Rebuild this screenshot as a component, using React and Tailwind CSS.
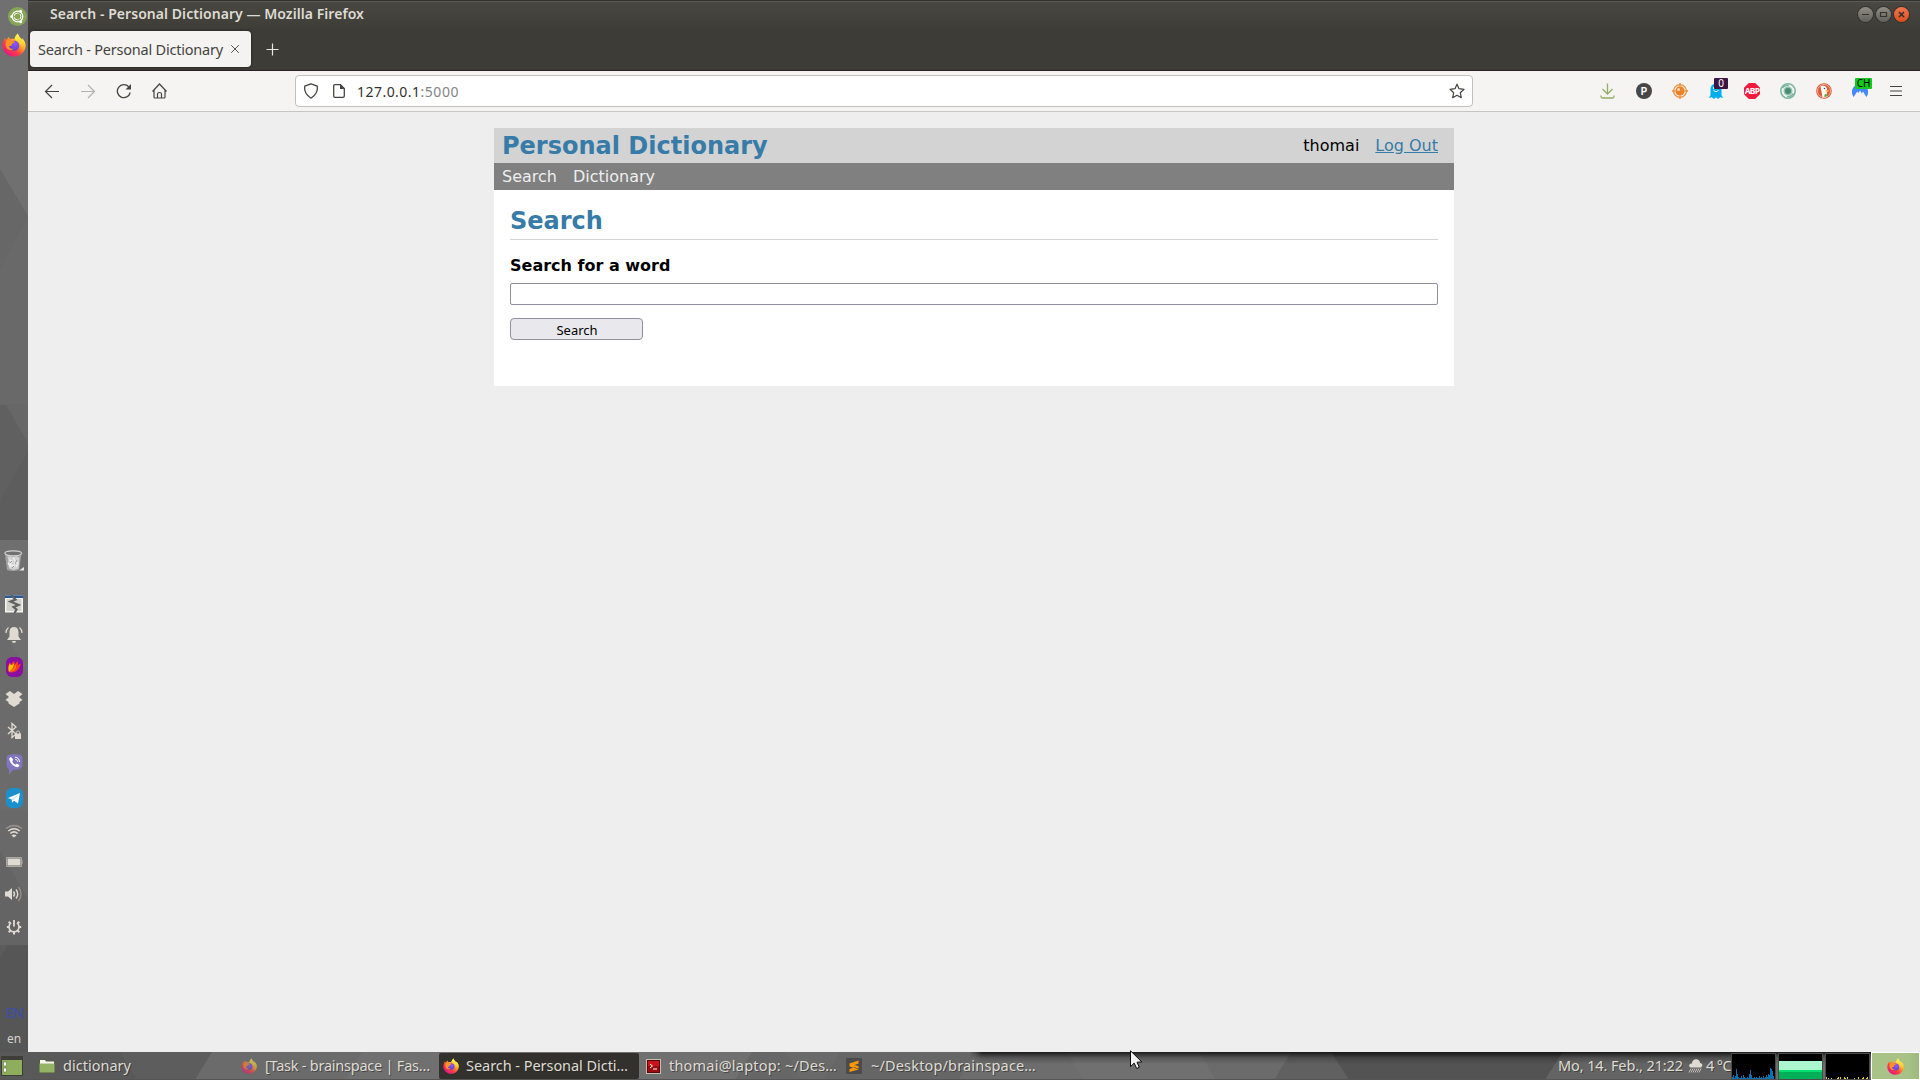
import React, { useLayoutEffect, useRef } from "react";

// Text run whose letter spacing is adjusted so that it fills a known width.
function Fit({ w, className = "", children }) {
  const ref = useRef(null);
  useLayoutEffect(() => {
    const el = ref.current;
    el.style.letterSpacing = "0px";
    const natural = el.getBoundingClientRect().width;
    el.style.letterSpacing = `${(w - natural) / el.textContent.length}px`;
  }, [w]);
  return (
    <span ref={ref} className={`inline-block whitespace-pre font-['Noto_Sans',sans-serif] ${className}`}>
      {children}
    </span>
  );
}

function Svg({ w = 16, h = 16, box, className = "", children }) {
  return (
    <svg width={w} height={h} viewBox={box || `0 0 ${w} ${h}`} fill="none" className={`block shrink-0 ${className}`}>
      {children}
    </svg>
  );
}

function Firefox({ id, size = 24, className = "" }) {
  return (
    <Svg w={size} h={size} box="0 0 24 24" className={className}>
      <defs>
        <linearGradient id={`${id}a`} x1="20" y1="3" x2="5" y2="22" gradientUnits="userSpaceOnUse">
          <stop offset="0" stopColor="#fff44f" />
          <stop offset=".35" stopColor="#ffa72b" />
          <stop offset=".65" stopColor="#ff4040" />
          <stop offset="1" stopColor="#e31587" />
        </linearGradient>
        <linearGradient id={`${id}c`} x1="18" y1="1" x2="17" y2="20" gradientUnits="userSpaceOnUse">
          <stop offset="0" stopColor="#fff44f" />
          <stop offset=".5" stopColor="#ffd033" />
          <stop offset="1" stopColor="#ff7a2b" stopOpacity="0" />
        </linearGradient>
        <radialGradient id={`${id}b`} cx=".6" cy=".3" r=".8">
          <stop offset="0" stopColor="#9059ff" />
          <stop offset="1" stopColor="#5a3bc0" />
        </radialGradient>
      </defs>
      <path d="M3 5.2C3.4 6 4 6.5 4.7 6.9 5.2 5.5 6 4.5 7 3.8c0 1 .5 1.800 1.200 2.300 1.500-.4 3-.3 4.300.2C13 4 14 2 16 .6c.2 2.400 1.600 3.400 3 5 .5.500.8 1 1.100 1.600.1-.7 0-1.200-.2-1.900C22.500 7.600 23.600 10.300 23.500 13c-.2 6-5.200 10.600-11.500 10.600S.5 18.700.5 12.600C.5 9.500 1.500 7.100 3 5.200Z" fill={`url(#${id}a)`} />
      <path d="M12.500 6.300C13 4 14 2 16 .6c.2 2.400 1.600 3.400 3 5 .5.500.8 1 1.100 1.600.1-.7 0-1.200-.2-1.900C22.500 7.600 23.600 10.300 23.500 13c-.1 3-1.500 5.700-3.700 7.600C21 15 18 9 12.500 6.300Z" fill={`url(#${id}c)`} />
      <circle cx="12.200" cy="12.800" r="5" fill={`url(#${id}b)`} />
      <path d="M3 5.200c.8 1.300 2 1.800 3.500 1.900C8.300 7.200 9 8 11 8.300c1 .1 1.600.4 1.500 1-.2.900-1.600.9-2.300 1.400-.6.500-.3 1.400-1 2-1 .8-2.200.2-2.200.2.300 2.300 2.400 3.300 4.500 2.800-2 2.300-6.200 1.300-7.500-2C3 11 4 8.500 4.500 7.500Z" fill="#ff9226" />
    </Svg>
  );
}

const Ubuntu = () => (
  <Svg w={19} h={19} box="0 0 19 19" className="translate-x-[3px]">
    <circle cx="9.500" cy="9.500" r="9.500" fill="#87a556" />
    <circle cx="9.500" cy="9.500" r="5.300" stroke="#fff" strokeWidth="1.200" />
    <circle cx="9.500" cy="9.500" r="3.400" stroke="#fff" strokeWidth="1" />
    <path d="M9.500 9.500H2M9.500 9.500l3.700-6.500M9.500 9.500l3.700 6.500" stroke="#87a556" strokeWidth="1.300" />
    <circle cx="3.700" cy="9.500" r="1.500" fill="#fff" />
    <circle cx="12.600" cy="4.300" r="1.500" fill="#fff" />
    <circle cx="12.600" cy="14.700" r="1.500" fill="#fff" />
  </Svg>
);

const Trash = () => (
  <Svg w={20} h={22} className="translate-y-px">
    <path d="M.800 3 3 20q6 2 12 0L17.600 3Z" fill="#a2a2a2" />
    <path d="m3.500 7 3-1 2.500 2 3-2 3.500 1.500-.5 5-.5 6-4.500 1.500-5-1.500-1-6 .5-2Z" fill="#d2d2d2" />
    <path d="m5 10 3 1-2 4 4 1 1-4 3 1-2 4M9 7l2 4M4 13l3 4" stroke="#efefef" strokeWidth="1.300" />
    <path d="m6 13 2-2M11 14l2-4M8 18l2-2" stroke="#8a8a8a" strokeWidth=".8" />
    <ellipse cx="9.200" cy="3.300" rx="8.400" ry="2.500" fill="#707070" stroke="#cfcfcf" strokeWidth="1.200" />
    <path d="m20 17-5 3.500h5Z" fill="#e4e4e4" />
  </Svg>
);
const Broken = () => (
  <Svg w={18} h={18}>
    <path d="M0 .500h18v17H0Z" fill="#f4f4f0" />
    <path d="M1.500 4h15v12h-15Z" fill="#d2d2cc" />
    <path d="M0 .500h18V3H0Z" fill="#2a5796" />
    <path d="M6 0l4.500 4.500-5 2 8 3.500-5 2 3 2.500-2 3.500" stroke="#606060" strokeWidth="2.200" />
  </Svg>
);
const Bell = () => (
  <Svg w={18} h={18}>
    <path d="M9 1c3.600 0 4.500 2.800 4.500 6v3.500L16 14H2l2.500-3.500V7C4.500 3.800 5.400 1 9 1ZM7 15h4c0 2.500-4 2.500-4 0Z" fill="#dfdbd2" />
    <path d="M3.500 1.500C2 2.700 1 4.500 1 7M14.500 1.500C16 2.700 17 4.500 17 7" stroke="#dfdbd2" strokeWidth="1.200" />
  </Svg>
);
const Flame = () => (
  <Svg w={17} h={20}>
    <rect width="17" height="20" rx="6" fill="#8a0fa0" />
    <path d="M3 15C1.500 11 2 8 4 5.500c.5 1 .5 2 .8 2.500C6 6.500 6.500 5 8.500 4c-.3 1.500 0 3 .3 4 .8-1.800 2-3 3.200-3.700-.2 1.600.2 2.700.2 3.700.8-.5 1.500-.9 2.800-1-1.500 2-1.500 4.500-4 6.500-2 1.500-5 2.500-8 1.500Z" fill="#ff3d1f" />
    <path d="M3 15c-1.300-4 0-7 1-9 .5 3 2 3 4.500-.5C7.500 8.500 8 11 3 15Z" fill="#ffc400" />
    <path d="M3 15c4-1.500 6.500-5 6-8 2 2 1 4.500-1.500 6.500Z" fill="#ff8a00" />
  </Svg>
);
const Dropbox = () => (
  <Svg w={18} h={16}>
    <path d="m5 0 4 3 4-3 4.500 3L14 6l3.500 3-3 2v1.500L9 16l-5.500-3.500V11l-3-2L4 6 .5 3Z" fill="#dfdbd2" />
  </Svg>
);
const Bluetooth = () => (
  <Svg w={16} h={18}>
    <path d="m2 5 8 7-4 3.500V1.500L10 5 2 12" stroke="#dfdbd2" strokeWidth="1.300" />
    <path d="M9 11.500h6V17H9Z" fill="#dfdbd2" />
    <path d="M10.300 12v-1.500c0-2 3.400-2 3.400 0V12" stroke="#dfdbd2" />
  </Svg>
);
const Viber = () => (
  <Svg w={17} h={21} className="translate-y-px">
    <path d="M3 .8Q8.500-.6 14 .8 16.500 1.500 16.500 5v5q0 4-2.500 5-3 1-7 1l-4 4.500V15Q.5 14 .5 10V5Q.5 1.500 3 .8Z" fill="#8175bd" />
    <path d="M4 3.500c1.500-1 2 .5 2.800 1.700.7 1.200-.8 1.500-.4 2.500.5 1.300 1.600 2.300 2.800 2.800 1 .3 1-1.200 2.300-.6 1.500.8 2.500 1.300 1.500 2.400-1 1.300-2 1.200-3.500.5C6.500 11.500 4.500 9 3.500 6.200c-.4-1.200-.4-2 .5-2.700Z" fill="#fff" />
    <path d="M9 3.200c2.800.2 4.500 2 4.500 4.800M9.300 5.300c1.300.1 2.200 1 2.300 2.300" stroke="#fff" />
  </Svg>
);
const Telegram = () => (
  <Svg w={17} h={20}>
    <rect width="17" height="20" rx="6" fill="#1c8fcd" />
    <path d="m2 10 12-5-2 10.500-4-2.700-2 1.900-.3-3.200Z" fill="#fff" />
    <path d="m5.700 11.500 6.300-4.500-5 5Z" fill="#a9d5ee" />
  </Svg>
);
const Wifi = () => (
  <Svg w={18} h={14}>
    <path d="M1 4.500Q9-1.500 17 4.500" stroke="#999690" strokeWidth="1.400" />
    <path d="M3.300 7Q9 2.500 14.700 7M5.300 9.500Q9 6.300 12.700 9.500" stroke="#dfdbd2" strokeWidth="1.500" />
    <path d="M6.500 11.500Q9 9.500 11.500 11.500L9 13.500Z" fill="#dfdbd2" />
  </Svg>
);
const Battery = () => (
  <Svg w={17} h={10}>
    <path d="M.5.500h15v9H.5ZM16 3v4" stroke="#aaa79f" />
    <path d="M1.500 1.500h13v7h-13Z" fill="#dfdbd2" />
  </Svg>
);
const Sound = () => (
  <Svg w={18} h={16}>
    <path d="M0 5.500h3L7 2v12l-4-3.500H0Z" fill="#dfdbd2" />
    <path d="M8.500 5.500q2 2.500 0 5M11 3.500q3.500 4.500 0 9" stroke="#dfdbd2" strokeWidth="1.400" />
    <path d="M13.500 1q5 7 0 14" stroke="#969389" strokeWidth="1.300" />
  </Svg>
);
const Power = () => (
  <Svg w={16} h={16}>
    <path d="M5 3.900a5 5 0 1 0 6 0" stroke="#dfdbd2" strokeWidth="1.600" />
    <path d="M8 1v6.500" stroke="#dfdbd2" strokeWidth="1.800" />
    <path d="M.800 8h2.500M12.700 8h2.500M8 12.800v2.700M2.700 13.300l1.600-1.600M13.300 13.300l-1.600-1.600M2.700 2.700l1.600 1.600M13.300 2.700l-1.600 1.600" stroke="#dfdbd2" strokeWidth="2" />
  </Svg>
);

const TRAY = [
  ["mt-2", Trash],
  ["mt-5", Broken],
  ["mt-[7px]", Bell],
  ["mt-2", Flame],
  ["mt-2", Dropbox],
  ["mt-2", Bluetooth],
  ["mt-2", Viber],
  ["mt-[11px]", Telegram],
  ["mt-[9px]", Wifi],
  ["mt-[7px]", Battery],
  ["mt-2", Sound],
  ["mt-[9px]", Power],
];

function Sidebar() {
  return (
    <aside className="relative flex w-7 shrink-0 flex-col bg-[#666]">
      <svg className="absolute inset-0" width="28" height="1052" fill="none">
        <path d="M0 0h28v540H0Z" fill="#676767" />
        <path d="M0 0h28v216L0 169Z" fill="#707070" />
        <path d="M28 216v188H0V270Z" fill="#696969" />
        <path d="M0 405h6l22 38v97H0Z" fill="#606060" />
        <path d="M28 452v88H0v-40Z" fill="#5d5d5d" />
        <path d="M0 540h28v405H0Z" fill="#6f6f6f" />
        <path d="m0 625 28 49v136H0Z" fill="#6b6b6b" />
        <path d="M0 810h28v135H0Z" fill="#696969" />
        <path d="m0 851 28 48v46H0Z" fill="#646464" />
        <path d="M0 945h28v107H0Z" fill="#565656" />
        <path d="M0 945h8l-8 13Z" fill="#5b5b5b" />
      </svg>
      <div className="relative flex h-8 items-center justify-center"><Ubuntu /></div>
      <div className="relative flex h-7 items-center justify-center"><Firefox id="fs" size={24} className="-translate-y-px" /></div>
      <div className="relative mt-[480px] flex h-[405px] flex-col">
        {TRAY.map(([m, Icon], i) => (
          <div key={i} className={`flex h-6 items-center justify-center ${m}`}><Icon /></div>
        ))}
      </div>
      <div className="relative mt-[57px] flex h-5 items-center justify-center">
        <Fit w={17} className="text-[15px] leading-5 font-semibold text-[#42509a]">EN</Fit>
      </div>
      <div className="relative mt-[7px] flex h-5 items-center justify-center">
        <Fit w={14} className="text-[12px] leading-5 text-[#d5d2cb]">en</Fit>
      </div>
    </aside>
  );
}

function TitleBar() {
  return (
    <div className="flex h-[29px] items-center justify-between bg-linear-to-b from-[#494843] to-[#3e3d38] pr-[11px] pl-[22px] shadow-[inset_0_1px_0_#33322f,inset_0_2px_0_#5b5a54]">
      <Fit w={314} className="-mt-0.5 text-[14px] leading-[27px] font-semibold text-[#dfdbd2]">Search - Personal Dictionary — Mozilla Firefox</Fit>
      <div className="flex gap-[3px]">
        <Svg w={15} h={15} className="rounded-full bg-linear-to-b from-[#8f8d85] to-[#62605a] ring-1 ring-[#33322e]">
          <path d="M4 7.500h7" stroke="#33322e" strokeWidth="1.200" />
        </Svg>
        <Svg w={15} h={15} className="rounded-full bg-linear-to-b from-[#8f8d85] to-[#62605a] ring-1 ring-[#33322e]">
          <path d="M4.500 5.500h6v4h-6Z" stroke="#33322e" strokeWidth="1.200" />
        </Svg>
        <Svg w={15} h={15} className="rounded-full bg-linear-to-b from-[#f2764c] to-[#db4d1b] ring-1 ring-[#33322e]">
          <path d="m5 5 5 5m0-5-5 5" stroke="#33322e" strokeWidth="1.700" />
        </Svg>
      </div>
    </div>
  );
}

function Tabs() {
  return (
    <div className="flex h-[42px] items-start border-b border-[#282025] bg-[#3d3c37] pt-0.5 pl-0.5">
      <div className="flex h-9 w-[221px] items-center rounded bg-[#f4f3f1] pl-2 shadow-[0_0_3px_#0008]">
        <Fit w={185} className="text-[14.500px] leading-9 text-[#45443f]">Search - Personal Dictionary</Fit>
        <Svg w={10} h={10} className="ml-[7px]"><path d="m1.200 1.200 7.600 7.600m0-7.600L1.200 8.800" stroke="#55544f" /></Svg>
      </div>
      <Svg w={13} h={13} className="mt-3 ml-[15px]"><path d="M6.500.500v12M.500 6.500h12" stroke="#e9e7e2" strokeWidth="1.200" /></Svg>
    </div>
  );
}

function Extensions() {
  const cell = "relative flex h-9 w-9 items-center justify-center";
  return (
    <div className="ml-auto flex pr-[6px]">
      <div className={cell}><Svg><path d="M7.500.500v10M2.500 6l5 5 5-5M1 12.500v1q0 1.500 1.500 1.500h10q1.500 0 1.500-1.500v-1" stroke="#93ad68" strokeWidth="1.300" /></Svg></div>
      <div className={cell}>
        <div className="flex h-4 w-4 items-center justify-center rounded-full bg-[#474747] font-[Roboto,sans-serif] text-[10px] font-bold text-white">P</div>
      </div>
      <div className={cell}>
        <Svg>
          <circle cx="8" cy="8" r="6.400" stroke="#ec9140" strokeWidth="1.200" />
          <path d="M8 0v3M8 13v3M0 8h3M13 8h3" stroke="#ec9140" strokeWidth="1.500" />
          <circle cx="8" cy="8" r="4.700" fill="#e8832a" />
          <circle cx="6.600" cy="6.500" r="1.500" fill="#f8d9b9" />
        </Svg>
      </div>
      <div className={cell}>
        <Svg><path d="M2.500 6a5.500 5.500 0 0 1 11 0v6l1.500 3-2.800-.7L10 16l-2-1.700L6 16l-2.200-1.700L1 15l1.500-3Z" fill="#00aef0" /><path d="M5.500 7.500q2.500 2.500 5 0" stroke="#fff" /><circle cx="6" cy="5" r="1" fill="#fff" /></Svg>
        <div className="absolute top-[5px] left-4 flex h-[11px] w-[14px] items-center justify-center rounded-[1px] bg-[#3c1543] font-['Noto_Sans',sans-serif] text-[10px] leading-[11px] text-white">0</div>
      </div>
      <div className={cell}>
        <div className="flex h-4 w-4 items-center justify-center bg-[#f01b3f] [clip-path:polygon(30%_0,70%_0,100%_30%,100%_70%,70%_100%,30%_100%,0_70%,0_30%)]">
          <Fit w={14.5} className="text-[8.500px] leading-4 font-bold text-white [font-stretch:condensed]">ABP</Fit>
        </div>
      </div>
      <div className={cell}>
        <Svg>
          <circle cx="8" cy="8" r="7.200" stroke="#7db7a0" strokeWidth="1.600" />
          <circle cx="8" cy="8" r="3.700" fill="#468a74" stroke="#8ec2ae" strokeWidth="1.500" />
          <path d="M2.500 5Q5 1.500 9 2.500M7 13.500q4 .8 6.500-3" stroke="#7db7a0" strokeWidth="1.500" />
        </Svg>
      </div>
      <div className={cell}>
        <Svg>
          <circle cx="8" cy="8" r="7.800" fill="#db5a38" />
          <circle cx="8" cy="8" r="6.500" stroke="#f0b09d" strokeWidth="1" />
          <path d="M4.500 3.300c3.500-1.300 6.500.2 6.500 3.400L12 8l-1.200 1.500V14L6.500 14.500Z" fill="#fff" />
          <path d="M9.500 7.200q2-.7 4 .3-1.500 1.500-4 1.300Z" fill="#f5b92e" />
          <path d="m9 10.800 3 1-2 2.200-2-.5Z" fill="#5bb04a" />
          <circle cx="8.500" cy="5.500" r=".8" fill="#2d4f8e" />
        </Svg>
      </div>
      <div className={cell}>
        <Svg><path d="M1.700 14A8 8 0 0 1 8 1a8 8 0 0 1 6.300 13L11 8.500 9.800 10.500 8 7.500 6.500 10 5.200 8.500Z" fill="#4687ff" /></Svg>
        <div className="absolute top-[5px] left-[13px] flex h-[11px] w-[17px] items-center justify-center rounded-[1px] bg-[#12c91f] font-['Noto_Sans',sans-serif] text-[10px] leading-[11px] text-black">CH</div>
      </div>
      <div className={cell}><Svg w={12} h={12}><path d="M0 1.500h12M0 6h12M0 10.500h12" stroke="#45443f" strokeWidth="1.200" /></Svg></div>
    </div>
  );
}

function Toolbar() {
  return (
    <div className="flex h-[41px] items-center border-b border-[#c6c5c3] bg-[#f5f4f2]">
      <div className="flex w-[267px] gap-5 pl-4">
        <Svg><path d="M15 8.500H1.500M8 2 1.500 8.500 8 15" stroke="#45443f" strokeWidth="1.200" /></Svg>
        <Svg><path d="M1 8.500h13.500M8 2l6.500 6.500L8 15" stroke="#b3b2af" strokeWidth="1.200" /></Svg>
        <Svg><path d="M14.200 9.500A6.500 6.500 0 1 1 12.700 3.800" stroke="#45443f" strokeWidth="1.300" /><path d="M15 1v5.500H9.500Z" fill="#45443f" /></Svg>
        <Svg><path d="M.500 8.500 7.500 1l7 7.500M2 7v7q0 1 1 1h9q1 0 1-1V7M5.500 15v-4q0-1.500 2-1.500t2 1.500v4" stroke="#45443f" strokeWidth="1.200" /></Svg>
      </div>
      <div className="flex h-8 w-[1178px] items-center rounded border border-[#c2c0bd] bg-white pl-[7px]">
        <Svg><path d="M8 .8 14.300 3.200q.9 7.500-6.300 12Q.8 10.700 1.700 3.200Z" stroke="#45443f" strokeWidth="1.300" strokeLinejoin="round" /></Svg>
        <Svg w={12} h={14} className="ml-[14px]"><path d="M7.500.700H2q-1.300 0-1.300 1.300v10q0 1.300 1.300 1.300h8q1.300 0 1.300-1.300V4.500Z" stroke="#45443f" strokeWidth="1.300" /><path d="M7 .500v4.500h4.500Z" fill="#45443f" /></Svg>
        <Fit w={63.500} className="mt-px ml-3 text-[14px] leading-[30px] text-[#33322e]">127.0.0.1</Fit>
        <Fit w={38.500} className="mt-px text-[14px] leading-[30px] text-[#858480]">:5000</Fit>
        <Svg className="mr-[7px] ml-auto"><path d="m8 1.200 2 4.500 5 .6-3.700 3.400 1 5L8 12.200l-4.300 2.500 1-5L1 6.300l5-.6Z" stroke="#45443f" strokeWidth="1.200" strokeLinejoin="round" /></Svg>
      </div>
      <Extensions />
    </div>
  );
}

function Page() {
  return (
    <div className="flex-1 bg-[#eee] pt-4 font-['DejaVu_Sans',sans-serif] text-base text-black">
      <div className="ml-[466px] h-[258px] w-[960px] bg-white">
        <header className="flex h-[35px] items-center bg-[lightgray] pr-4 pl-2">
          <h1 className="mr-auto pt-px text-2xl leading-[36px] font-bold text-[#377ba8]">Personal Dictionary</h1>
          <span className="leading-[35px]">thomai</span>
          <a className="ml-4 leading-[35px] text-[#377ba8] underline">Log Out</a>
        </header>
        <nav className="flex h-[27px] items-center gap-4 bg-[gray] pl-2 text-[#eee]">
          <a className="leading-[27px]">Search</a>
          <a className="leading-[27px]">Dictionary</a>
        </nav>
        <main className="px-4 pt-3">
          <h2 className="h-[38px] border-b border-[lightgray] text-2xl leading-[39px] font-bold text-[#377ba8]">Search</h2>
          <label className="mt-4 block h-5 leading-5 font-bold">Search for a word</label>
          <input className="mt-[7px] block h-[22px] w-full rounded-[2px] border border-[#8f8f9d] bg-white" />
          <button className="mt-[13px] flex h-[22px] w-[133px] items-center justify-center rounded-[4px] border border-[#8f8f9d] bg-[#e9e9ed]">
            <Fit w={41} className="ml-px pt-px text-[13px] leading-5 text-black">Search</Fit>
          </button>
        </main>
      </div>
    </div>
  );
}

const BARS = [2, 4, 1, 3, 10, 5, 2, 1, 1, 3, 1, 4, 2, 1, 1, 2, 1, 5, 9, 4, 1, 1, 2, 1, 2, 1, 1, 3, 1, 2, 1, 3, 1, 2, 4, 2, 5, 4, 11, 10, 8, 3];
const NET = [2, 0, 1, 0, 0, 1, 0, 0, 0, 0, 0, 1, 2, 0, 2, 0, 0, 0, 2, 1, 0, 2, 0, 0, 0, 0, 0, 0, 1, 0, 0, 0, 2, 0, 0, 0, 1, 2, 0, 0, 1, 2];

function Graph({ data, color }) {
  return (
    <div className="mt-px flex h-[27px] w-[45px] items-end border border-[#4b4b4b] bg-black">
      {data.map((v, i) => (
        <div key={i} className="w-px" style={{ height: v, background: color }} />
      ))}
    </div>
  );
}

const taskText = "text-[14.500px] leading-[26px] -mt-0.5 text-[#dfdbd2] [text-shadow:1px_1px_0_#2228]";

function Taskbar() {
  return (
    <footer className="relative flex h-7 items-center bg-[#6d6d6d]">
      <svg className="absolute inset-0" width="1920" height="28" fill="none">
        <defs>
          <linearGradient id="shade" x1="0" y1="0" x2="0" y2="1">
            <stop offset="0" stopColor="#000" stopOpacity=".75" />
            <stop offset=".5" stopColor="#000" stopOpacity=".2" />
            <stop offset="1" stopColor="#000" stopOpacity="0" />
          </linearGradient>
          <linearGradient id="fade" x1="0" y1="0" x2="1" y2="0">
            <stop offset="0" stopColor="#fff" stopOpacity="0" />
            <stop offset=".013" stopColor="#fff" />
          </linearGradient>
          <mask id="edge">
            <path d="M970 0h950v12H970Z" fill="url(#fade)" />
          </mask>
        </defs>
        <path d="M0 0h212l-17 28H0Z" fill="#595959" />
        <path d="M120 0h92l-17 28h-58Z" fill="#5d5d5d" />
        <path d="M212 0h150l-17 28H195Z" fill="#6b6b6b" />
        <path d="M362 0h390l-17 28H345Z" fill="#707070" />
        <path d="M752 0h34l16 28h-67Z" fill="#676767" />
        <path d="M786 0h54l-17 28h-21Z" fill="#6a6a6a" />
        <path d="M840 0h135l-16 28H823Z" fill="#666" />
        <path d="M1067 0h133l16 28h-133Z" fill="#707070" />
        <path d="M1200 0h91l-17 28h-58Z" fill="#6b6b6b" />
        <path d="M1291 0h40l18 28h-75Z" fill="#606060" />
        <path d="M1331 0h232l-18 28h-196Z" fill="#535353" />
        <path d="M1563 0h170v28h-188Z" fill="#646464" />
        <path d="M970 0h950v12H970Z" fill="url(#shade)" mask="url(#edge)" />
        <path d="M0 27.500h1920" stroke="#555" />
      </svg>
      <Svg w={22} h={20} className="relative ml-px">
        <path d="M0 0h22v20H0Z" fill="#3e3d38" />
        <path d="M1 4h20v15H1Z" fill="#8eae5e" />
        <path d="M2.500 6h3v4h-3ZM2.500 12h3v4h-3Z" fill="#fff" stroke="#5d7440" strokeWidth=".6" />
      </Svg>
      <div className="relative flex w-[218px] items-center pl-4">
        <Svg w={16} h={14}><path d="M0 .500h6l1 1.500h8.500V14H0Z" fill="#4e6033" /><path d="M1 1h5l1 1.500h8V5H1Z" fill="#f5f5f0" /><path d="M.500 4.500h15v9H.500Z" fill="#94b365" /></Svg>
        <Fit w={68} className={`ml-2 ${taskText}`}>dictionary</Fit>
      </div>
      <div className="relative flex w-[198px] items-center">
        <Firefox id="ft" size={16} className="opacity-60" />
        <Fit w={165} className={`ml-2 ${taskText}`}>[Task - brainspace | Fas…</Fit>
      </div>
      <div className="relative flex h-[26px] w-[200px] items-center rounded-[2px] bg-[#32312d] pl-[4px]">
        <Firefox id="fu" size={16} />
        <Fit w={162} className={`ml-[7px] ${taskText}`}>Search - Personal Dicti…</Fit>
      </div>
      <div className="relative flex w-[208px] items-center pl-[7px]">
        <Svg w={15} h={15}><path d="M0 0h15v15H0Z" fill="#bfbfb8" /><path d="M1 1h13v13H1Z" fill="#5d0507" /><path d="M2 2h11v5H2Z" fill="#c8141a" /><path d="M2 7h11v6H2Z" fill="#9d0b10" /><path d="m4 5 2.500 2L4 9M7 10h4" stroke="#fff" /></Svg>
        <Fit w={168} className={`ml-[8px] ${taskText}`}>thomai@laptop: ~/Des…</Fit>
      </div>
      <div className="relative flex items-center">
        <Svg className="-translate-x-px"><rect width="16" height="16" rx="1" fill="#4b4b4b" /><path d="m12.500 2.500-9 3v3l9 2.800v-3L8.500 7l4-1.500ZM3.500 14v-3l5-1.700 4 1.200v1Z" fill="#ff9800" /></Svg>
        <Fit w={165} className={`ml-[8px] ${taskText}`}>~/Desktop/brainspace…</Fit>
      </div>
      <div className="relative ml-auto flex h-7 items-center">
        <Fit w={125} className={taskText}>Mo, 14. Feb., 21:22</Fit>
        <Svg w={15} h={16} className="ml-[5px]"><path d="M3 9.500C0 9 1 5 4 5.500 4 0 12 0 12 5c3 0 3 4 .5 4.500Z" fill="#dfdbd2" /><path d="m3 10.500-2 4m4-4-2 4m4-4-2 4m4-4-2 4m4-4-2 4m4-4-2 4" stroke="#c9c6be" strokeWidth=".9" /></Svg>
        <Fit w={25} className={`ml-[3px] ${taskText}`}>4 °C</Fit>
        <Graph data={BARS} color="#0a70b0" />
        <div className="mt-px ml-[2px] flex h-[27px] w-[45px] flex-col border border-[#4b4b4b] bg-black pt-[7px]">
          <div className="h-[9px] bg-[#abf5cf]" />
          <div className="h-[2px] bg-[#00e070]" />
          <div className="flex-1 bg-[#00b058]" />
        </div>
        <div className="ml-[2px] flex"><Graph data={NET} color="#e8cf1c" /></div>
        <div className="ml-[1px] flex h-7 w-[49px] items-center justify-center border border-white bg-[#a9c288] shadow-[inset_-14px_0_10px_-8px_#9fb97c]">
          <Firefox id="fv" size={17} />
        </div>
      </div>
      <svg className="absolute -top-[2px] left-[1130px]" width="14" height="20" fill="none">
        <path d="M.500.800v15.800l3.700-3.500 2.500 5.400 2.600-1.200L7 12.200l4.800-.3Z" fill="#f3f3f3" stroke="#0c0c0c" />
      </svg>
    </footer>
  );
}

export default function App() {
  return (
    <div className="flex h-[1080px] w-[1920px] flex-col overflow-hidden bg-[#eee]">
      <div className="flex h-[1052px]">
        <Sidebar />
        <div className="flex flex-1 flex-col">
          <TitleBar />
          <Tabs />
          <Toolbar />
          <Page />
        </div>
      </div>
      <Taskbar />
    </div>
  );
}
